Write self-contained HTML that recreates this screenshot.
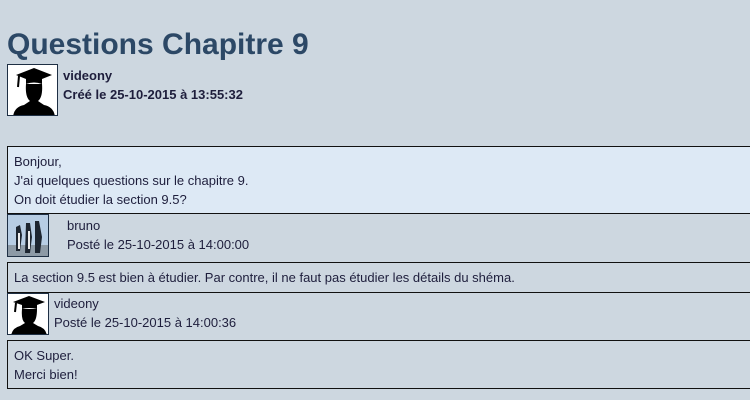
<!DOCTYPE html>
<html><head><meta charset="utf-8"><style>
body{margin:0;background:#cdd7e0;font-family:"Liberation Sans",Arial,sans-serif;color:#1e1e3c;font-size:13px;width:750px;height:400px;overflow:hidden;position:relative}
.a{position:absolute}
h1{position:absolute;left:7px;top:28px;margin:0;font-size:30px;font-weight:bold;color:#2c4866;letter-spacing:0}
.box{position:absolute;left:7px;width:760px;border:1px solid #111;box-sizing:border-box;padding:5px 6px;line-height:19px}
.av{position:absolute;border:1px solid #1e2f44;background:#fff;box-sizing:border-box;overflow:hidden}
</style></head><body>
<h1>Questions Chapitre 9</h1>
<div class="av" style="left:7px;top:64px;width:51px;height:52px">
<svg width="51" height="52" viewBox="0 0 51 52"><path d="M8 10 L26 3 L44 10 L34 14 L34 19 Q26 16 18 19 L18 14 Z" fill="#000"/><path d="M11 11 L10 22" stroke="#000" stroke-width="2"/><path d="M18 19 Q17 32 22 36 L16 40 Q6 42 5 52 L47 52 Q46 42 36 40 L30 36 Q35 32 34 19 Z" fill="#000"/></svg></div>
<div class="a" style="left:63px;top:66px;font-weight:bold;line-height:19px">videony<br>Créé le 25-10-2015 à 13:55:32</div>
<div class="box" style="top:146px;height:68px;background:#dde9f5">Bonjour,<br>J'ai quelques questions sur le chapitre 9.<br>On doit étudier la section 9.5?</div>
<div class="av" style="left:7px;top:214px;width:42px;height:43px;background:#9fb6cf">
<svg width="42" height="43" viewBox="0 0 42 43"><rect width="42" height="30" fill="#b7cde4"/><rect y="30" width="42" height="13" fill="#8d9aa6"/><path d="M8 12 L12 10 L14 20 L12 36 L8 36 Z M18 8 L22 8 L24 22 L22 38 L17 38 Z M27 6 L31 6 L34 22 L32 38 L27 38 Z" fill="#1d2530"/><path d="M10 18 L12 18 L12 34 L10 34Z M20 16 L22 16 L22 34 L20 34Z" fill="#eee"/></svg></div>
<div class="a" style="left:67px;top:216px;line-height:19px">bruno<br>Posté le 25-10-2015 à 14:00:00</div>
<div class="box" style="top:262px;height:31px">La section 9.5 est bien à étudier. Par contre, il ne faut pas étudier les détails du shéma.</div>
<div class="av" style="left:7px;top:293px;width:42px;height:42px">
<svg width="42" height="42" viewBox="0 0 42 42"><path d="M5 8 L21 2 L37 8 L29 11 L29 15 Q21 13 14 15 L14 11 Z" fill="#000"/><path d="M8 9 L7 18" stroke="#000" stroke-width="2"/><path d="M14 15 Q13 26 17 29 L12 32 Q4 34 3 42 L39 42 Q38 34 30 32 L25 29 Q29 26 29 15 Z" fill="#000"/></svg></div>
<div class="a" style="left:54px;top:294px;line-height:19px">videony<br>Posté le 25-10-2015 à 14:00:36</div>
<div class="box" style="top:340px;height:49px">OK Super.<br>Merci bien!</div>
</body></html>
